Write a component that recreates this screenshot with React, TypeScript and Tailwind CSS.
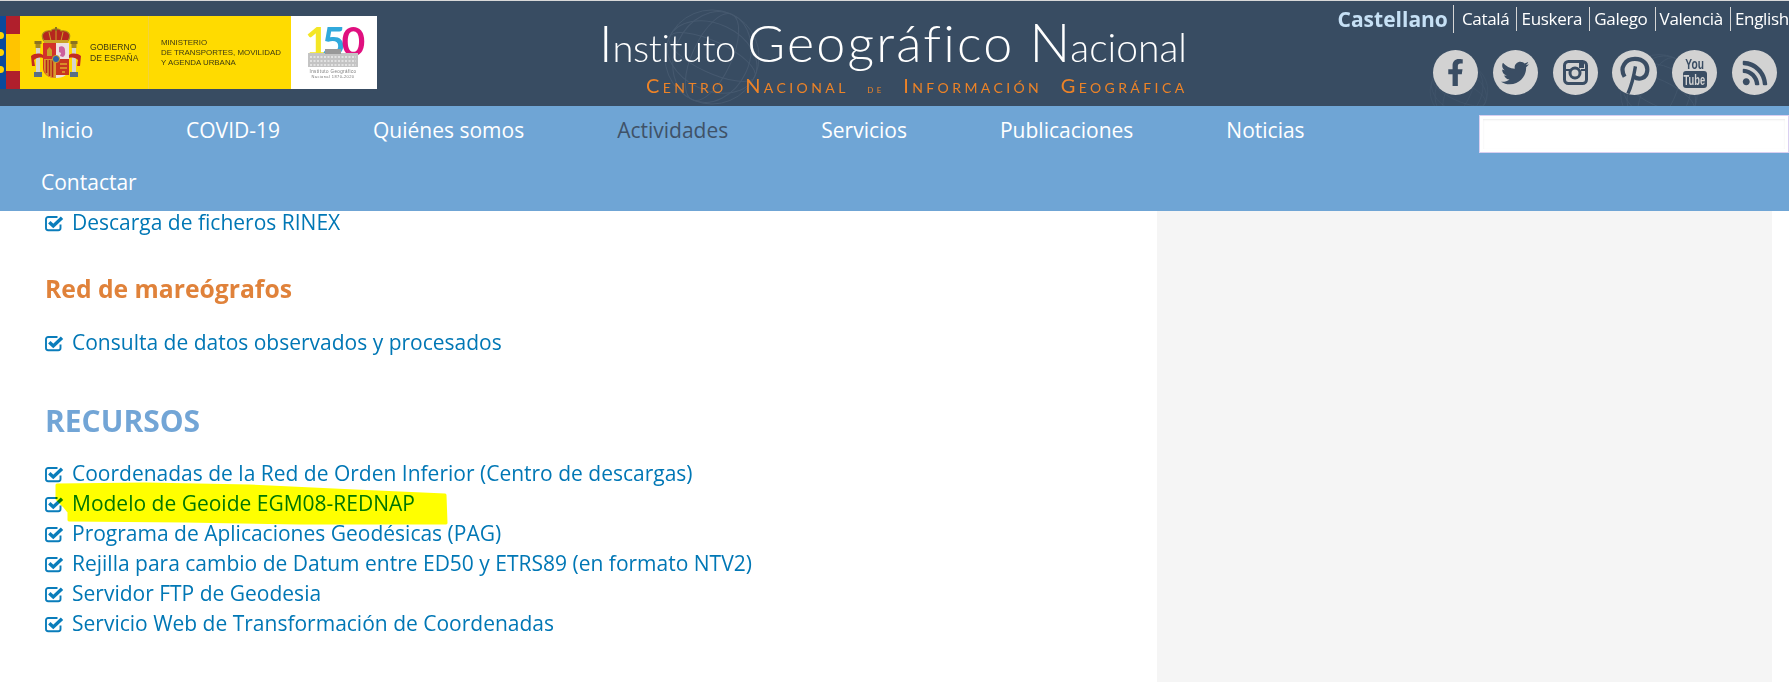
import React from "react";
import { FaFacebookF, FaTwitter, FaRss } from "react-icons/fa";

const sans = { fontFamily: '"Open Sans", sans-serif' };

function Check() {
  return (
    <svg width="19" height="17" viewBox="0 0 19 17" className="shrink-0" aria-hidden="true">
      <path d="M15.5 9.5v3.6a2.2 2.2 0 0 1-2.2 2.2H3.2A2.2 2.2 0 0 1 1 13.100V4.200A2.200 2.200 0 0 1 3.200 2h9.300" fill="none" stroke="#0a7dbb" strokeWidth="1.900" />
      <path d="M4.300 7.200 8.300 11 17 2.800" fill="none" stroke="#0a7dbb" strokeWidth="3.400" />
    </svg>
  );
}

function Item({ children }: { children: React.ReactNode }) {
  return (
    <li className="flex items-center gap-[8px] h-[30px] text-[21px] text-[#0077b5]">
      <Check />
      <span>{children}</span>
    </li>
  );
}

function Crest() {
  return (
    <svg width="50" height="52" viewBox="0 0 50 52" aria-hidden="true">
      <path d="M13 14C8 6 15 3 20 4c1-3 9-3 10 0 5-1 12 2 7 10z" fill="#b5261e" stroke="#a98a1e" strokeWidth="1.200" />
      <path d="M25 3v11M18 5l2 9M32 5l-2 9" stroke="#c9a227" strokeWidth="1" />
      <rect x="13" y="13" width="24" height="3.500" fill="#c9a227" />
      <rect x="24" y="0" width="2" height="4" fill="#8a7320" />
      <rect x="3.500" y="14" width="7" height="3" fill="#8a7320" />
      <rect x="4.500" y="17" width="5" height="4" fill="#a98a1e" />
      <rect x="5" y="21" width="4" height="24" fill="#d6d6cc" />
      <rect x="3" y="45" width="8" height="5" fill="#5a6f86" />
      <rect x="39.500" y="14" width="7" height="3" fill="#8a7320" />
      <rect x="40.500" y="17" width="5" height="4" fill="#a98a1e" />
      <rect x="41" y="21" width="4" height="24" fill="#d6d6cc" />
      <rect x="39" y="45" width="8" height="5" fill="#5a6f86" />
      <path d="M0 29c4-3 9-3 12-1v3c-4-1-7 0-9 2l1 6-3 0zM50 29c-4-3-9-3-12-1v3c4-1 7 0 9 2l-1 6 3 0z" fill="#c42b20" />
      <path d="M12 16h13v35c-8 0-13-4-13-10z" fill="#d3322a" />
      <path d="M25 16h13v25c0 6-5 10-13 10z" fill="#eee0e0" />
      <rect x="25" y="32" width="13" height="16" fill="#c8361f" />
      <path d="M13 32h12v19c-7 0-12-3-12-10z" fill="#d99a2b" />
      <path d="M15.500 33v13M18.500 33v16M21.500 33v17" stroke="#b5261e" strokeWidth="1.600" />
      <path d="M16 29v-6l2.500-3 2.500 3v6z" fill="#c9a227" />
      <path d="M28 20c3-2 6 0 6 3s1 5-2 7l-3-1 1-3-2-1z" fill="#cc5f9c" />
      <path d="M29 37h7M29 41h7M31 45h3" stroke="#e0a72c" strokeWidth="1.500" />
      <circle cx="25" cy="32" r="3.600" fill="#2f63a8" stroke="#c9a227" />
    </svg>
  );
}

function Logo() {
  return (
    <div className="flex w-[377px] h-[73px] shrink-0">
      <div className="relative w-[6px] bg-[#0b4a9c] overflow-hidden">
        <span className="absolute left-[-3px] top-[16px] w-[7px] h-[7px] rounded-full bg-[#ffd400]" />
        <span className="absolute left-[-3px] top-[33px] w-[7px] h-[7px] rounded-full bg-[#ffd400]" />
        <span className="absolute left-[-3px] top-[50px] w-[7px] h-[7px] rounded-full bg-[#ffd400]" />
      </div>
      <div className="flex flex-col w-[14px]">
        <div className="h-[18px] bg-[#b01f2c]" />
        <div className="flex-1 bg-[#ffc400]" />
        <div className="h-[18px] bg-[#b01f2c]" />
      </div>
      <div className="flex items-center w-[129px] bg-[#ffdb00] border-r border-[#f3d23a] pl-[11px] gap-[9px]">
        <Crest />
        <div className="text-[#3d3a12] text-[8.6px] leading-[11px]" style={{ fontFamily: '"Liberation Sans", sans-serif' }}>
          GOBIERNO<br />DE ESPAÑA
        </div>
      </div>
      <div className="flex items-center w-[142px] bg-[#ffdb00] pl-[12px]">
        <div className="text-[#3d3a12] text-[7.9px] leading-[10px] whitespace-nowrap" style={{ fontFamily: '"Liberation Sans", sans-serif' }}>
          MINISTERIO<br />DE TRANSPORTES, MOVILIDAD<br />Y AGENDA URBANA
        </div>
      </div>
      <div className="flex-1 bg-white flex justify-center">
        <svg width="62" height="73" viewBox="0 0 62 73" aria-hidden="true">
          <text x="2" y="40" fontSize="41" fontFamily="Lato, sans-serif" fontWeight="700" letterSpacing="-7">
            <tspan fill="#f4e625">1</tspan>
            <tspan fill="#31a9dc">5</tspan>
            <tspan fill="#e0107f" dx="3">0</tspan>
          </text>
          <path d="M5 37h50v14H5z" fill="#c4c4c4" />
          <path d="M22 33h16v5H22z" fill="#999999" />
          <path d="M7 41h46M7 45h46M7 49h46" stroke="#ffffff" strokeWidth="1.200" strokeDasharray="2 1.500" />
          <text x="30" y="57" fontSize="4.500" textAnchor="middle" letterSpacing=".4" fill="#777" fontFamily="Liberation Sans, sans-serif">Instituto Geográfico</text>
          <text x="30" y="62" fontSize="4" textAnchor="middle" letterSpacing=".4" fill="#777" fontFamily="Liberation Sans, sans-serif">Nacional 1870-2020</text>
        </svg>
      </div>
    </div>
  );
}

function GlobeLines({ size, color }: { size: number; color: string }) {
  return (
    <svg width={size} height={size} viewBox="0 0 100 100" fill="none" stroke={color} strokeWidth="1" aria-hidden="true">
      <circle cx="50" cy="50" r="48" />
      <ellipse cx="50" cy="50" rx="20" ry="48" transform="rotate(25 50 50)" />
      <ellipse cx="50" cy="50" rx="38" ry="48" transform="rotate(25 50 50)" />
      <ellipse cx="50" cy="50" rx="48" ry="16" transform="rotate(25 50 50)" />
      <ellipse cx="50" cy="50" rx="48" ry="34" transform="rotate(25 50 50)" />
    </svg>
  );
}

function Title() {
  return (
    <div className="relative ml-[222px] mt-[13px] w-[600px] shrink-0">
      <div className="absolute left-[64px] top-[-6px]">
        <GlobeLines size={98} color="#46596f" />
      </div>
      <div className="relative flex items-baseline text-white whitespace-nowrap h-[56px] font-light" style={{ fontFamily: "Lato, sans-serif" }}>
        <span className="text-[52px] leading-[56px]">I</span>
        <span className="text-[38px] leading-[56px] tracking-[-0.4px]">nstituto</span>
        <span className="text-[52px] leading-[56px] ml-[11px] tracking-[2.2px]">Geográfico</span>
        <span className="text-[54px] leading-[56px] ml-[15px]">N</span>
        <span className="text-[39px] leading-[56px]">acional</span>
      </div>
      <div className="relative ml-[47px] text-[#ed8327] whitespace-nowrap tracking-[3.4px] [word-spacing:10px] text-[20px] leading-[20px] mt-[5px] [font-variant:small-caps]" style={{ fontFamily: "Lato, sans-serif" }}>
        Centro Nacional <span className="text-[11px]">de</span> Información Geográfica
      </div>
    </div>
  );
}

function Social({ children }: { children: React.ReactNode }) {
  return (
    <span className="flex items-center justify-center w-[45px] h-[45px] rounded-full bg-[#d2d2d2] text-[#3a4d63] overflow-hidden">
      {children}
    </span>
  );
}

function InstagramIcon() {
  return (
    <svg width="25" height="25" viewBox="0 0 25 25" aria-hidden="true">
      <rect x="1.500" y="1.500" width="22" height="22" rx="4" fill="none" stroke="#3a4d63" strokeWidth="3" />
      <rect x="16" y="3" width="5" height="5" fill="#3a4d63" />
      <path d="M2 10h5M18 10h5" stroke="#3a4d63" strokeWidth="2" />
      <circle cx="12" cy="13" r="5" fill="none" stroke="#3a4d63" strokeWidth="3" />
    </svg>
  );
}

function PinterestIcon() {
  return (
    <svg width="31" height="45" viewBox="0 0 33 45" aria-hidden="true">
      <path d="M6 27C0 17 7 8 17 8c9 0 14 6 13 13-1 8-9 10-14 6" fill="none" stroke="#3a4d63" strokeWidth="4.500" />
      <path d="M17.500 16C16 25 14 35 9.500 45" fill="none" stroke="#3a4d63" strokeWidth="3.600" />
    </svg>
  );
}

function YoutubeIcon() {
  return (
    <span className="flex flex-col items-center font-bold leading-none" style={{ fontFamily: '"Liberation Sans", sans-serif' }}>
      <span className="text-[15px] leading-[13px] scale-x-[0.68]">You</span>
      <span className="flex items-center justify-center w-[24px] h-[17px] mt-[1px] rounded-[3px] bg-[#3a4d63] text-[#d2d2d2] text-[15px]">
        <span className="scale-x-[0.62]">Tube</span>
      </span>
    </span>
  );
}

const langs = ["Euskera", "Galego", "Valencià", "English"];

function HeaderRight() {
  return (
    <div className="relative ml-auto flex flex-col items-end overflow-hidden w-[470px]" style={sans}>
      <div className="absolute left-[110px] top-[60px]"><GlobeLines size={60} color="#42566c" /></div>
      <div className="absolute left-[300px] top-[52px]"><GlobeLines size={80} color="#42566c" /></div>
      <div className="relative flex items-center h-[33px] mt-[1px] whitespace-nowrap text-white text-[17px] tracking-[-0.3px]">
        <span className="text-[21px] tracking-normal font-bold text-[#c6e0f5] pr-[5px] border-r border-[#d5d5d5] h-[28px] leading-[28px]">Castellano</span>
        <span className="pl-[8px] pr-[7px]">Catalá</span>
        {langs.map((l) => (
          <span key={l} className="border-l border-[#d5d5d5] h-[24px] leading-[24px] pl-[4px] pr-[7px] last:pr-0">{l}</span>
        ))}
      </div>
      <div className="relative flex gap-[14.8px] mt-[15px] mr-[12px]">
        <Social><FaFacebookF size={27} /></Social>
        <Social><FaTwitter size={28} /></Social>
        <Social><InstagramIcon /></Social>
        <Social><PinterestIcon /></Social>
        <Social><YoutubeIcon /></Social>
        <Social><FaRss size={28} /></Social>
      </div>
    </div>
  );
}

const nav = ["Inicio", "COVID-19", "Quiénes somos", "Actividades", "Servicios", "Publicaciones", "Noticias", "Contactar"];

export default function App() {
  return (
    <div className="relative flex flex-col h-[682px] overflow-hidden bg-white" style={sans}>
      <header className="relative z-10 flex h-[106px] shrink-0 bg-[#384c62] border-t border-[#d8d8d8]">
        <div className="pt-[15px]"><Logo /></div>
        <Title />
        <HeaderRight />
      </header>
      <nav className="relative z-10 h-[105px] shrink-0 bg-[#6fa5d5] flex text-[21px] text-white">
        <div className="flex flex-wrap w-[1479px] content-start pl-[41px]">
          {nav.map((n) => (
            <a key={n} className={n === "Actividades" ? "h-[52px] leading-[48px] mr-[93px] text-[#3f5268]" : "h-[52px] leading-[48px] mr-[93px]"}>{n}</a>
          ))}
        </div>
        <div className="mt-[9px] h-[38px] flex-1 bg-white border border-[#d9cff0] p-[3px]">
          <div className="h-full bg-white shadow-[inset_0_1px_2px_rgba(0,0,0,0.08)]" />
        </div>
      </nav>
      <main className="flex flex-1 min-h-0">
        <div className="w-[1157px] shrink-0 pl-[45px] -mt-[3px]">
          <ul><Item>Descarga de ficheros RINEX</Item></ul>
          <h3 className="mt-[34px] h-[34px] leading-[34px] text-[24.7px] font-bold text-[#e0823a]">Red de mareógrafos</h3>
          <ul className="mt-[22px]"><Item>Consulta de datos observados y procesados</Item></ul>
          <h2 className="mt-[44px] h-[38px] leading-[38px] text-[30px] font-bold text-[#72a5d6]">RECURSOS</h2>
          <ul className="relative mt-[19px]">
            <Item>Coordenadas de la Red de Orden Inferior (Centro de descargas)</Item>
            <Item>Modelo de Geoide EGM08-REDNAP</Item>
            <Item>Programa de Aplicaciones Geodésicas (PAG)</Item>
            <Item>Rejilla para cambio de Datum entre ED50 y ETRS89 (en formato NTV2)</Item>
            <Item>Servidor FTP de Geodesia</Item>
            <Item>Servicio Web de Transformación de Coordenadas</Item>
            <svg className="absolute left-[10px] top-[22px] mix-blend-multiply" width="394" height="46" viewBox="0 0 394 46" aria-hidden="true">
              <path d="M2 4 90 3 195 5 300 10 390 14 391 42 245 42 130 40 14 39 14 31 10 26 2 18z" fill="#ffff00" stroke="#ffff00" strokeWidth="3" strokeLinejoin="round" />
            </svg>
          </ul>
        </div>
        <aside className="w-[615px] shrink-0 bg-[#f5f5f5]" />
      </main>
    </div>
  );
}
